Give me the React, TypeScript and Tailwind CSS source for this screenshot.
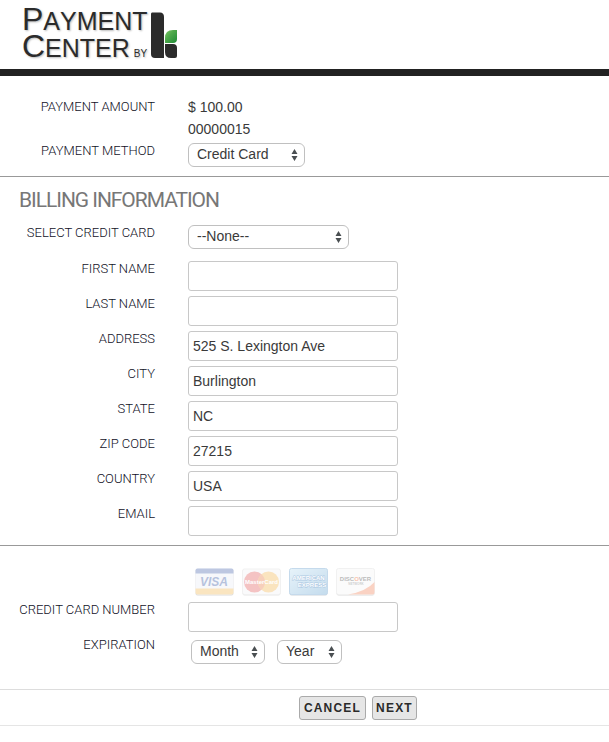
import { useState, type ReactNode } from "react";

type Field = { id: string; label: string; value: string };

const BILLING_FIELDS: Field[] = [
  { id: "first-name", label: "FIRST NAME", value: "" },
  { id: "last-name", label: "LAST NAME", value: "" },
  { id: "address", label: "ADDRESS", value: "525 S. Lexington Ave" },
  { id: "city", label: "CITY", value: "Burlington" },
  { id: "state", label: "STATE", value: "NC" },
  { id: "zip", label: "ZIP CODE", value: "27215" },
  { id: "country", label: "COUNTRY", value: "USA" },
  { id: "email", label: "EMAIL", value: "" },
];

const MONTHS = ["01", "02", "03", "04", "05", "06", "07", "08", "09", "10", "11", "12"];
const YEARS = ["2014", "2015", "2016", "2017", "2018", "2019"];

const LABEL = "block text-right font-[Roboto,sans-serif] text-[13px] leading-4 font-light text-[#11111f]";
const INPUT =
  "h-[30px] w-[210px] rounded-[3px] border border-[#c8c8c8] bg-white px-1 text-sm text-[#3a3a3a] outline-none focus:border-[#888]";

function Row({ label, htmlFor, children }: { label: string; htmlFor: string; children: ReactNode }) {
  return (
    <div className="grid grid-cols-[155px_1fr] items-start gap-x-[33px]">
      <label htmlFor={htmlFor} className={LABEL}>
        {label}
      </label>
      <div className="flex">{children}</div>
    </div>
  );
}

type SelectProps = { id: string; label?: string; width: string; options: string[] };

function Select({ id, label, width, options }: SelectProps) {
  return (
    <span className={`relative block ${width}`}>
      <select
        id={id}
        aria-label={label}
        className="block h-6 w-full appearance-none rounded-md border border-[#c0c0c0] bg-white pr-5 pb-[2px] pl-2 text-sm leading-5 text-[#3a3a3a] outline-none"
      >
        {options.map((option) => (
          <option key={option}>{option}</option>
        ))}
      </select>
      <svg className="pointer-events-none absolute top-[6px] right-[7px] h-3 w-[7px]" viewBox="0 0 7 12">
        <path d="M3.5 0 6.5 5h-6zM3.5 12l3-5h-6z" fill="#4a4f52" />
      </svg>
    </span>
  );
}

function Logo() {
  return (
    <div className="flex items-start pl-[22px]">
      <h1 className="w-[129px] text-[25px] leading-[27px] whitespace-nowrap text-[#2b2b2b] [font-kerning:none] [text-shadow:1px_1px_2px_#bbb]">
        <span className="block h-[27px]">
          <span className="text-[32px]">P</span>AYMENT
        </span>
        <span className="block h-[27px]">
          <span className="text-[32px]">C</span>ENTER
          <span className="ml-1 text-[10px]">BY</span>
        </span>
      </h1>
      <svg className="mt-[6px] h-[46px] w-[27px]" viewBox="0 0 27 46">
        <defs>
          <linearGradient id="leaf" x1="0" y1="0" x2="1" y2="1">
            <stop offset="0" stopColor="#7cc866" />
            <stop offset="0.4" stopColor="#4fa94b" />
            <stop offset="1" stopColor="#1d8a35" />
          </linearGradient>
        </defs>
        <path d="M1 .5h8Q13 .5 13 5v41H4q-4 0-4-4V2Q0 .5 1 .5z" fill="#2b2b2b" />
        <path d="M14 26q0-8 8-8h4v9q0 4-4 4h-8z" fill="url(#leaf)" />
        <path d="M14 32h8q4 0 4 4v8q0 2-2 2h-4q-6 0-6-6z" fill="#2b2b2b" />
      </svg>
    </div>
  );
}

function CardLogos() {
  return (
    <div className="flex gap-2 pl-[7px] opacity-40 [&>svg]:h-7 [&>svg]:w-[39px]">
      <svg viewBox="0 0 39 28" role="img" aria-label="Visa">
        <rect x=".5" y="1" width="38" height="26.5" rx="2" fill="#aaa" />
        <rect x=".5" y=".5" width="38" height="26" rx="2" fill="#eceef6" />
        <path d="M.5 5.5v-3q0-2 2-2h34q2 0 2 2v3z" fill="#5b76b5" />
        <path d="M.5 20.5h38v4q0 2-2 2h-34q-2 0-2-2z" fill="#f3c064" />
        <text x="19" y="17.5" textAnchor="middle" fontSize="12" fontWeight="700" fontStyle="italic" fill="#4a68ac">
          VISA
        </text>
      </svg>
      <svg viewBox="0 0 39 28" role="img" aria-label="MasterCard">
        <rect x=".5" y="1.5" width="38" height="26" rx="2" fill="#c8c8c8" />
        <rect x=".5" y="1" width="38" height="25.5" rx="2" fill="#f4f4f6" stroke="#ddd" />
        <circle cx="12.5" cy="14" r="10.5" fill="#e46a6a" />
        <circle cx="26.5" cy="14" r="10.5" fill="#f5bc62" />
        <path d="M19.5 6.2a10.5 10.5 0 0 1 0 15.6 10.5 10.5 0 0 1 0-15.6z" fill="#ec8a58" />
        <text x="19.5" y="16" textAnchor="middle" fontSize="6" fontWeight="700" fill="#fff">
          MasterCard
        </text>
      </svg>
      <svg viewBox="0 0 39 28" role="img" aria-label="American Express">
        <defs>
          <linearGradient id="amex" x1="0" y1="0" x2="1" y2="1">
            <stop offset="0" stopColor="#c4e2f4" />
            <stop offset="1" stopColor="#6ea9d4" />
          </linearGradient>
        </defs>
        <rect x=".5" y="1" width="38" height="26.5" rx="2" fill="#89a" />
        <rect x=".5" y=".5" width="38" height="26" rx="2" fill="url(#amex)" stroke="#70a5d0" />
        <g fontSize="6" fontWeight="700" fill="#fff" stroke="#2f76b8" strokeWidth="1" paintOrder="stroke">
          <text x="19.5" y="12" textAnchor="middle">
            AMERICAN
          </text>
          <text x="23" y="19" textAnchor="middle">
            EXPRESS
          </text>
        </g>
      </svg>
      <svg viewBox="0 0 39 28" role="img" aria-label="Discover">
        <rect x=".5" y="1" width="38" height="26.5" rx="2" fill="#aaa" />
        <rect x=".5" y=".5" width="38" height="26" rx="2" fill="#f7f7f7" stroke="#ddd" />
        <path d="M38.5 14v10.5q0 2-2 2H12q18-3 26.5-12.5z" fill="#f3916c" />
        <text x="19.5" y="13" textAnchor="middle" fontSize="6" fontWeight="700" fill="#555">
          DISC<tspan fill="#f06a30">O</tspan>VER
        </text>
        <text x="20" y="17" textAnchor="middle" fontSize="3" fontWeight="700" fill="#888">
          NETWORK
        </text>
      </svg>
    </div>
  );
}

function App() {
  const [billing, setBilling] = useState(BILLING_FIELDS);

  const update = (id: string, value: string) =>
    setBilling((fields) => fields.map((f) => (f.id === id ? { ...f, value } : f)));

  return (
    <div className="min-h-dvh bg-white font-['Liberation_Sans',Arial,sans-serif] text-sm text-[#3a3a3a]">
      <header className="border-b-[7px] border-[#222] pt-[6px] pb-[9px]">
        <Logo />
      </header>

      <form onSubmit={(e) => e.preventDefault()}>
        {/* Payment summary */}
        <section className="border-b border-[#999] pt-5 pb-[9px]">
          <dl className="mb-[3px] grid grid-cols-[155px_1fr] gap-x-[33px]">
            <dt className={`${LABEL} pt-[3px]`}>PAYMENT AMOUNT</dt>
            <dd className="leading-[22px]">
              $ 100.00
              <br />
              00000015
            </dd>
          </dl>
          <Row label="PAYMENT METHOD" htmlFor="method">
            <Select id="method" width="w-[117px]" options={["Credit Card", "eCheck"]} />
          </Row>
        </section>

        {/* Billing */}
        <section className="border-b border-[#999] pt-[11px] pb-[9px]">
          <h2 className="mb-[13px] pl-[19px] font-[Roboto,sans-serif] text-[21px] leading-6 font-normal tracking-tighter text-[#777]">
            BILLING INFORMATION
          </h2>
          <Row label="SELECT CREDIT CARD" htmlFor="saved-card">
            <Select id="saved-card" width="w-[161px]" options={["--None--"]} />
          </Row>
          <div className="mt-3 flex flex-col gap-[5px]">
            {billing.map((field) => (
              <Row key={field.id} label={field.label} htmlFor={field.id}>
                <input
                  id={field.id}
                  className={INPUT}
                  value={field.value}
                  onChange={(e) => update(field.id, e.target.value)}
                />
              </Row>
            ))}
          </div>
        </section>

        {/* Card details */}
        <section className="border-b border-[#ddd] pt-[22px] pb-[25px]">
          <div className="mb-[6px] pl-[188px]">
            <CardLogos />
          </div>
          <div className="flex flex-col gap-[5px]">
            <Row label="CREDIT CARD NUMBER" htmlFor="card-number">
              <input id="card-number" className={INPUT} />
            </Row>
            <Row label="EXPIRATION" htmlFor="exp-month">
              <div className="flex gap-3 pt-[3px] pl-[3px]">
                <Select id="exp-month" width="w-[74px]" options={["Month", ...MONTHS]} />
                <Select id="exp-year" label="Expiration year" width="w-[65px]" options={["Year", ...YEARS]} />
              </div>
            </Row>
          </div>
        </section>

        <footer className="flex gap-[6px] border-b border-[#e5e5e5] pt-[6px] pb-[5px] pl-[299px] text-xs font-bold tracking-widest text-[#2a2a2a]">
          <button type="button" className="h-6 w-[67px] rounded-[3px] border border-[#aaa] bg-[#e6e6e6]">
            CANCEL
          </button>
          <button type="submit" className="h-6 w-[45px] rounded-[3px] border border-[#aaa] bg-[#e6e6e6]">
            NEXT
          </button>
        </footer>
      </form>
    </div>
  );
}

export default App;
